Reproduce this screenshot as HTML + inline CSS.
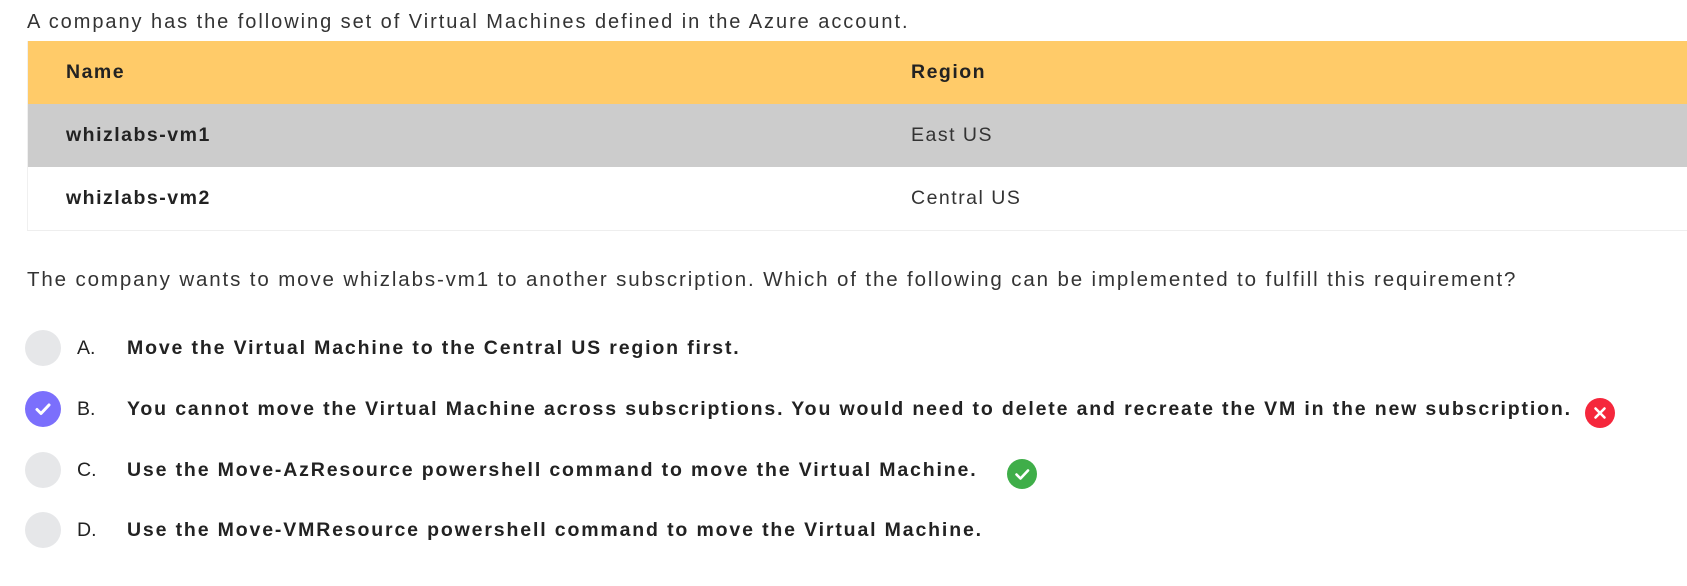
<!DOCTYPE html>
<html><head><meta charset="utf-8"><style>
body{margin:0;width:1687px;height:586px;background:#fff;font-family:"Liberation Sans",sans-serif;color:#222;position:relative;overflow:hidden}
.t{position:absolute;white-space:nowrap}
.intro{left:27px;top:11px;font-size:20px;letter-spacing:1.95px;color:#333}
table{position:absolute;left:27px;top:41px;width:1660px;border-collapse:collapse;border-left:1px solid #f0f0f0}
td{height:63px;padding:0;font-size:19.5px;letter-spacing:1.5px}
tr.h td{background:#ffcb69;font-weight:bold;color:#222}
tr.g td{background:#cccccc}
tr.w td{background:#fff;border-bottom:1px solid #eee}
td.a{padding-left:38px;width:845px;font-weight:bold}
td.b{color:#333}
tr.h td.b{font-weight:bold;color:#222}
.q{left:27px;top:268px;font-size:20.5px;letter-spacing:1.87px;color:#333}
.c{position:absolute;left:25px;width:36px;height:36px;border-radius:50%;background:#e6e7e9}
.l{position:absolute;left:77px;font-size:19.5px;color:#222}
.o{position:absolute;left:127px;font-size:19.5px;letter-spacing:1.85px;font-weight:bold;color:#222;white-space:nowrap}
</style></head><body>
<div class="t intro">A company has the following set of Virtual Machines defined in the Azure account.</div>
<table>
<tr class="h"><td class="a">Name</td><td class="b">Region</td></tr>
<tr class="g"><td class="a">whizlabs-vm1</td><td class="b">East US</td></tr>
<tr class="w"><td class="a">whizlabs-vm2</td><td class="b">Central US</td></tr>
</table>
<div class="t q">The company wants to move whizlabs-vm1 to another subscription. Which of the following can be implemented to fulfill this requirement?</div>

<div class="c" style="top:330px"></div><div class="l" style="top:337px">A.</div><div class="o" style="top:337px">Move the Virtual Machine to the Central US region first.</div>

<div class="c" style="top:391px;background:#7b6ffc"><svg width="36" height="36" viewBox="0 0 36 36"><path d="M12 18.5l4 4 8-8.5" fill="none" stroke="#fff" stroke-width="3" stroke-linecap="round" stroke-linejoin="round"/></svg></div>
<div class="l" style="top:398px">B.</div><div class="o" style="top:398px">You cannot move the Virtual Machine across subscriptions. You would need to delete and recreate the VM in the new subscription.</div>
<svg style="position:absolute;left:1585px;top:398px" width="30" height="30" viewBox="0 0 30 30"><circle cx="15" cy="15" r="15" fill="#f5273c"/><path d="M10.5 10.5l9 9M19.5 10.5l-9 9" stroke="#fff" stroke-width="2.6" stroke-linecap="round"/></svg>

<div class="c" style="top:452px"></div><div class="l" style="top:459px">C.</div><div class="o" style="top:459px">Use the Move-AzResource powershell command to move the Virtual Machine.</div>
<svg style="position:absolute;left:1007px;top:459px" width="30" height="30" viewBox="0 0 30 30"><circle cx="15" cy="15" r="15" fill="#3fae49"/><path d="M9.5 15.5l4 4 7.5-8" fill="none" stroke="#fff" stroke-width="2.6" stroke-linecap="round" stroke-linejoin="round"/></svg>

<div class="c" style="top:512px"></div><div class="l" style="top:519px">D.</div><div class="o" style="top:519px">Use the Move-VMResource powershell command to move the Virtual Machine.</div>
</body></html>
